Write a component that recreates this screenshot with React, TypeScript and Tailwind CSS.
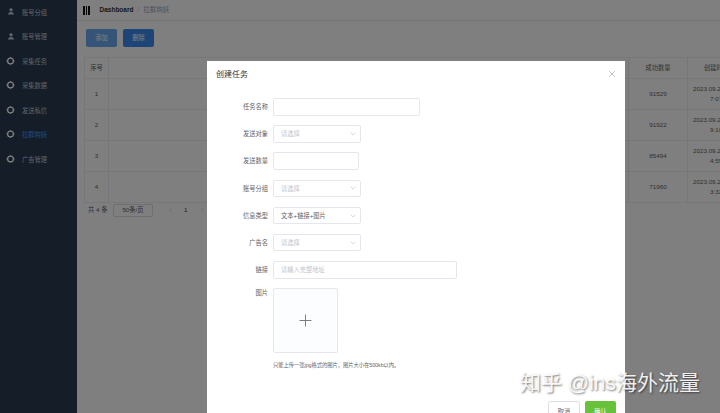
import { User, ChevronDown, ChevronLeft, ChevronRight, Plus, X } from "lucide-react";

const font = "font-['Liberation_Sans','Noto_Sans_CJK_SC',sans-serif]";

const menu = [
    { name: "账号分组", person: true },
    { name: "账号管理", person: true },
    { name: "采集任务" },
    { name: "采集数据" },
    { name: "发送私信" },
    { name: "拉群钩妖", active: true },
    { name: "广告管理" },
];

const rows = [
    { id: 1, count: "91529", date: "2023.09.21", time: "7:07:32" },
    { id: 2, count: "91922", date: "2023.09.21", time: "9:10:15" },
    { id: 3, count: "85494", date: "2023.09.21", time: "4:55:08" },
    { id: 4, count: "71960", date: "2023.09.21", time: "3:32:41" },
];

function RingIcon() {
    return (
        <svg width="9" height="9" viewBox="0 0 10 10" fill="none" stroke="#ffffff" strokeWidth="1.4">
            <circle cx="5" cy="5" r="3.2" />
            <path d="M5 0.4v1M5 8.6v1M0.4 5h1M8.6 5h1" strokeWidth="1" />
        </svg>
    );
}

function Sidebar() {
    return (
        <aside className="w-[77px] h-full shrink-0 bg-[#2a3a50] text-[#bfcbd9]">
            <div className="-translate-y-[0.5px]">
                {menu.map((m) => (
                    <div
                        key={m.name}
                        className={`h-[24.5px] flex items-center pl-[6px] gap-[7px] text-[6.25px] ${m.active ? "text-[#409eff]" : ""}`}
                    >
                        <span className="w-[9px] flex justify-center">
                            {m.person ? <User size={8} fill="currentColor" /> : <RingIcon />}
                        </span>
                        <span>{m.name}</span>
                    </div>
                ))}
            </div>
        </aside>
    );
}

function DataTable() {
    return (
        <div className="w-[672px] ml-[7px] border-l border-t border-[#ebeef5] text-[#606266] text-[6.25px] text-center">
            <div className="flex h-[21px] items-center border-b border-[#ebeef5]">
                <div className="w-[24px] h-full shrink-0 flex items-center justify-center border-r border-[#ebeef5]">序号</div>
                <div className="flex-1" />
                <div className="w-[60px] h-full shrink-0 flex items-center justify-center border-x border-[#ebeef5]">成功数量</div>
                <div className="w-[68px] shrink-0 text-left pl-[16px]">创建时间</div>
            </div>
            {rows.map((r) => (
                <div key={r.id} className="flex h-[31px] items-center border-b border-[#ebeef5]">
                    <div className="w-[24px] h-full shrink-0 flex items-center justify-center border-r border-[#ebeef5]">{r.id}</div>
                    <div className="flex-1" />
                    <div className="w-[60px] h-full shrink-0 flex items-center justify-center border-x border-[#ebeef5]">{r.count}</div>
                    <div className="w-[68px] shrink-0 leading-[10px] text-left">
                        <div className="pl-[5px]">{r.date}</div>
                        <div className="pl-[22px]">{r.time}</div>
                    </div>
                </div>
            ))}
        </div>
    );
}

function Main() {
    return (
        <main className="flex-1 min-w-0 h-full bg-white overflow-hidden">
            <header className="h-[21px] flex items-center border-b border-[#e6e6e6] pl-[6px] text-[6.5px]">
                <span className="flex gap-[1px] mr-[10px]">
                    <i className="w-[1.5px] h-[9px] bg-[#111]" />
                    <i className="w-[1.5px] h-[9px] bg-[#111]" />
                    <i className="w-[1.5px] h-[9px] bg-[#111]" />
                </span>
                <span className="font-bold text-[#303133]">Dashboard</span>
                <span className="mx-[4px] text-[#c0c4cc]">/</span>
                <span className="text-[#97a8be]">拉群钩妖</span>
            </header>
            <div className="flex gap-[6px] pl-[9px] pt-[8px] pb-[10px]">
                <button className="w-[31px] h-[18px] rounded-[2px] bg-[#6aa9ef] text-white text-[6.25px]">添加</button>
                <button className="w-[31px] h-[18px] rounded-[2px] bg-[#3a8bee] text-white text-[6.25px]">删除</button>
            </div>
            <DataTable />
            <div className="flex items-center h-[14px] pl-[11px] text-[6.25px] text-[#606266]">
                <span className="w-[25px]">共 4 条</span>
                <span className="w-[40px] h-[13px] flex items-center justify-center border border-[#dcdfe6] rounded-[2px]">
                    50条/页
                </span>
                <ChevronLeft size={7} className="ml-[14px] text-[#c0c4cc]" />
                <span className="ml-[10px] text-[#303133]">1</span>
                <ChevronRight size={7} className="ml-[12px] text-[#c0c4cc]" />
            </div>
        </main>
    );
}

function Label({ children }: { children: string }) {
    return <label className="w-[66px] shrink-0 pr-[5px] text-right text-[6.25px] text-[#606266]">{children}</label>;
}

function TextBox({ width, placeholder }: { width: string; placeholder?: string }) {
    return (
        <div className={`${width} h-[17.5px] flex items-center px-[7px] border border-[#e4e7ed] rounded-[2px] text-[6.25px] text-[#c0c4cc]`}>
            {placeholder}
        </div>
    );
}

function Select({ value, placeholder }: { value?: string; placeholder?: string }) {
    return (
        <div className="w-[88px] h-[17.5px] flex items-center justify-between pl-[7px] pr-[3px] border border-[#e4e7ed] rounded-[2px] text-[6.25px]">
            <span className={value ? "text-[#606266]" : "text-[#c0c4cc]"}>{value ?? placeholder}</span>
            <ChevronDown size={8} className="text-[#c0c4cc]" />
        </div>
    );
}

function Field({ label, children }: { label: string; children: React.ReactNode }) {
    return (
        <div className="flex items-center h-[17.5px] mb-[9.7px]">
            <Label>{label}</Label>
            {children}
        </div>
    );
}

function Modal() {
    return (
        <div className="w-[418px] h-[360px] bg-white">
            <div className="flex items-center justify-between h-[26px] pl-[9px] pr-[8px] pt-[2px]">
                <span className="text-[8px] text-[#303133]">创建任务</span>
                <X size={10} strokeWidth={1.4} className="text-[#909399] -mt-[3px]" />
            </div>
            <div className="pt-[11px]">
                <Field label="任务名称">
                    <TextBox width="w-[147px]" />
                </Field>
                <Field label="发送对象">
                    <Select placeholder="请选择" />
                </Field>
                <Field label="发送数量">
                    <TextBox width="w-[86px]" />
                </Field>
                <Field label="账号分组">
                    <Select placeholder="请选择" />
                </Field>
                <Field label="信息类型">
                    <Select value="文本+链接+图片" />
                </Field>
                <Field label="广告名">
                    <Select placeholder="请选择" />
                </Field>
                <Field label="链接">
                    <TextBox width="w-[184px]" placeholder="请输入完整地址" />
                </Field>
                <div className="flex">
                    <Label>图片</Label>
                    <div className="w-[65px] h-[65px] flex items-center justify-center border border-[#e4e7ed] rounded-[2px] bg-[#fbfdff]">
                        <Plus size={19} strokeWidth={1.2} className="text-[#707780]" />
                    </div>
                </div>
                <p className="ml-[66px] mt-[9px] text-[5.25px] text-[#606266]">
                    只能上传一张jpg格式的图片，图片大小在500kb以内。
                </p>
            </div>
            <div className="flex justify-end gap-[5px] pr-[9px] mt-[31px]">
                <button className="w-[32px] h-[20px] border border-[#dcdfe6] rounded-[2px] text-[6.25px] text-[#606266]">取消</button>
                <button className="w-[31px] h-[20px] rounded-[2px] bg-[#67c23a] text-[6.25px] text-white">确认</button>
            </div>
        </div>
    );
}

export default function App() {
    return (
        <div className={`relative w-[720px] h-[413px] overflow-hidden flex ${font}`}>
            <Sidebar />
            <Main />
            <div className="absolute inset-0 bg-black/50 pt-[61px] pl-[207px]">
                <Modal />
            </div>
            <div className="absolute left-[520px] top-[369px] text-[21px] leading-[28px] text-white/90 [text-shadow:1px_1px_2px_rgba(0,0,0,0.55)] whitespace-nowrap">
                知乎 @ins海外流量
            </div>
        </div>
    );
}
